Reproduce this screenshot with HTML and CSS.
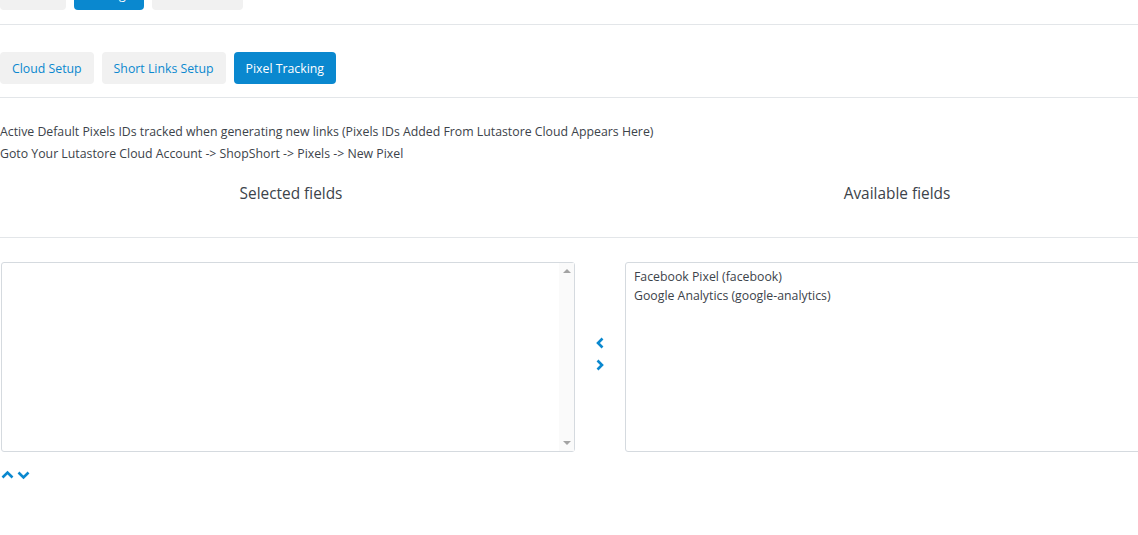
FILE: index.html
```html
<!DOCTYPE html>
<html lang="en">
<head>
    <meta charset="UTF-8">
    <meta name="viewport" content="width=device-width, initial-scale=1.0">
    <title>ShopShort Settings</title>
    <link rel="stylesheet" href="styles.css">
</head>
<body>
    <div class="page">
        <nav class="tabs tabs-main">
            <a class="tab">Actions</a>
            <a class="tab active">Settings</a>
            <a class="tab">Automation</a>
        </nav>
        <hr class="divider">

        <nav class="tabs">
            <a class="tab">Cloud Setup</a>
            <a class="tab">Short Links Setup</a>
            <a class="tab active">Pixel Tracking</a>
        </nav>
        <hr class="divider">

        <div class="intro">
            <p>Active Default Pixels IDs tracked when generating new links (Pixels IDs Added From Lutastore Cloud Appears Here)</p>
            <p>Goto Your Lutastore Cloud Account -&gt; ShopShort -&gt; Pixels -&gt; New Pixel</p>
        </div>

        <div class="field-titles">
            <div class="field-title">Selected fields</div>
            <div></div>
            <div class="field-title">Available fields</div>
        </div>
        <hr class="divider">

        <div class="picker">
            <div class="list list-selected">
                <div class="list-items"></div>
                <div class="scrollbar">
                    <span class="sb-up"></span>
                    <span class="sb-down"></span>
                </div>
            </div>
            <div class="move">
                <svg width="10" height="12" viewBox="0 0 10 12"><path d="M7.5 1.5 L3 6 L7.5 10.5" fill="none" stroke="#0a88cf" stroke-width="2.6"/></svg>
                <svg width="10" height="12" viewBox="0 0 10 12"><path d="M2.5 1.5 L7 6 L2.5 10.5" fill="none" stroke="#0a88cf" stroke-width="2.6"/></svg>
            </div>
            <div class="list list-available">
                <div class="list-items">
                    <div class="option">Facebook Pixel (facebook)</div>
                    <div class="option">Google Analytics (google-analytics)</div>
                </div>
            </div>
        </div>

        <div class="order">
            <svg width="13" height="10" viewBox="0 0 13 10"><path d="M1.5 7.5 L6.5 2.5 L11.5 7.5" fill="none" stroke="#0a88cf" stroke-width="2.6"/></svg>
            <svg width="13" height="10" viewBox="0 0 13 10"><path d="M1.5 2.5 L6.5 7.5 L11.5 2.5" fill="none" stroke="#0a88cf" stroke-width="2.6"/></svg>
        </div>
    </div>
</body>
</html>
```

FILE: styles.css
```css
body {
    margin: 0;
    padding: 0;
    background: #fff;
    font-family: "Open Sans", "Noto Sans", sans-serif;
    font-size: 12.3px;
    color: #3c434a;
    overflow: hidden;
}

.page {
    width: 1200px;
}

.tabs {
    display: flex;
    gap: 8px;
    margin: 27px 0 13px;
}

.tabs-main {
    margin-top: -22px;
    margin-bottom: 14px;
}

.tab {
    display: block;
    height: 32px;
    line-height: 33px;
    padding: 0 12px;
    border-radius: 4px;
    background: #f1f1f1;
    color: #0a88cf;
    font-size: 12.3px;
    white-space: nowrap;
}

.tab.active {
    background: #0a88cf;
    color: #fff;
}

.divider {
    border: none;
    border-top: 1px solid #e3e6e9;
    margin: 0;
}

.intro {
    padding-top: 23px;
}

.intro p {
    margin: 0;
    line-height: 22px;
    font-size: 12.3px;
}

.field-titles {
    display: grid;
    grid-template-columns: 582px 43px 544px;
    margin: 18px 0 32px;
}

.field-title {
    text-align: center;
    font-size: 15.4px;
    line-height: 22px;
}

.picker {
    display: grid;
    grid-template-columns: 574px 50px 574px;
    margin: 24px 0 0 1px;
}

.list {
    display: flex;
    height: 190px;
    box-sizing: border-box;
    border: 1px solid #d5dadf;
    border-radius: 3px;
    background: #fff;
}

.list-items {
    flex: 1;
    padding: 4px 8px;
}

.option {
    line-height: 19px;
}

.scrollbar {
    width: 15px;
    background: #fafafa;
    display: flex;
    flex-direction: column;
    justify-content: space-between;
    align-items: center;
    padding: 6px 0;
}

.sb-up,
.sb-down {
    width: 0;
    height: 0;
    border-left: 4px solid transparent;
    border-right: 4px solid transparent;
}

.sb-up {
    border-bottom: 4px solid #a3a3a3;
}

.sb-down {
    border-top: 4px solid #a3a3a3;
}

.move {
    display: flex;
    flex-direction: column;
    align-items: center;
    justify-content: center;
    gap: 10px;
    padding-bottom: 6px;
}

.move svg,
.order svg {
    display: block;
}

.order {
    display: flex;
    gap: 3px;
    margin: 18px 0 0 1px;
}
```
